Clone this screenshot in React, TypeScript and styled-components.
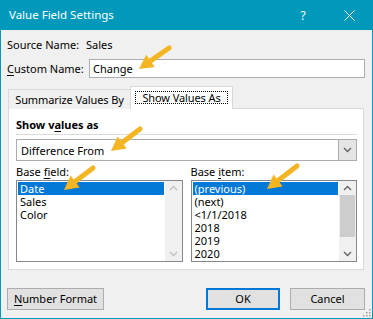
import React from "react";
import styled, { createGlobalStyle } from "styled-components";

const GlobalStyle = createGlobalStyle`
  html, body { margin: 0; padding: 0; background: #ffffff; }
  body {
    font-family: "Segoe UI", "Noto Sans", sans-serif;
    font-size: 11px;
    color: #000;
  }
  * { box-sizing: border-box; }
`;

const TEAL = "#0099bc";

const Window = styled.div`
  position: relative;
  width: 373px;
  height: 319px;
  background: #f0f0f0;
  border: 1px solid ${TEAL};
  border-top: none;
  display: flex;
  flex-direction: column;
  overflow: hidden;
  white-space: nowrap;
`;

const TitleBar = styled.div`
  height: 30px;
  flex: none;
  background: ${TEAL};
  color: #fff;
  display: flex;
  align-items: center;
  padding-left: 8px;
`;

const TitleText = styled.div`
  flex: 1;
  font-size: 11.5px;
  line-height: 16px;
`;

const TitleButton = styled.div`
  width: 46px;
  height: 30px;
  display: flex;
  align-items: center;
  justify-content: center;
  color: #fff;
  font-size: 12px;
`;

const Body = styled.div`
  flex: 1;
  display: flex;
  flex-direction: column;
  padding: 0 7px 0 6px;
`;

const InfoRow = styled.div<{ $top: number; $h: number }>`
  display: flex;
  align-items: center;
  margin-top: ${(p) => p.$top}px;
  height: ${(p) => p.$h}px;
  line-height: 16px;
`;

const Label = styled.div<{ $w: number }>`
  width: ${(p) => p.$w}px;
  flex: none;
`;

const TextInput = styled.div`
  flex: 1;
  height: 19px;
  background: #fff;
  border: 1px solid #abadb3;
  padding-left: 3px;
  display: flex;
  align-items: center;
`;

const TabStrip = styled.div`
  display: flex;
  align-items: flex-end;
  margin: 8px 1px -1px 1px;
  position: relative;
  z-index: 1;
`;

const Tab = styled.div<{ $active?: boolean; $w: number }>`
  display: flex;
  align-items: center;
  justify-content: center;
  width: ${(p) => p.$w}px;
  height: ${(p) => (p.$active ? 23 : 20)}px;
  padding-bottom: ${(p) => (p.$active ? 1 : 0)}px;
  background: ${(p) => (p.$active ? "#fff" : "#f0f0f0")};
  border: 1px solid #d9d9d9;
  border-bottom: none;
  margin-left: ${(p) => (p.$active ? "-1px" : "0")};
  line-height: 16px;
  letter-spacing: -0.1px;
`;

const FocusBox = styled.span`
  width: 93px;
  border: 1px dotted #000;
  line-height: 11px;
  height: 13px;
  display: flex;
  align-items: center;
  justify-content: center;
`;

const Panel = styled.div`
  margin: 0 1px;
  height: 162px;
  flex: none;
  background: #fff;
  border: 1px solid #d9d9d9;
  padding: 0 6px 0 7px;
  display: flex;
  flex-direction: column;
`;

const SectionTitle = styled.div`
  margin-top: 8px;
  height: 16px;
  line-height: 16px;
  font-weight: bold;
`;

const Separator = styled.div`
  margin-top: 1px;
  height: 1px;
  background: #dcdcdc;
`;

const Combo = styled.div`
  margin-top: 4px;
  height: 22px;
  display: flex;
  border: 1px solid #acacac;
  background: #fff;
`;

const ComboText = styled.div`
  flex: 1;
  padding-left: 3px;
  display: flex;
  align-items: center;
  border: 1px solid #fff;
`;

const ComboButton = styled.div`
  width: 18px;
  background: #e5e5e5;
  border-left: 1px solid #acacac;
  display: flex;
  align-items: center;
  justify-content: center;
`;

const ListsGrid = styled.div`
  display: grid;
  grid-template-columns: 1fr 1fr;
  column-gap: 8px;
`;

const ListColumn = styled.div`
  display: flex;
  flex-direction: column;
`;

const ListLabel = styled.div`
  margin-top: 3px;
  height: 16px;
  line-height: 16px;
`;

const ListBox = styled.div`
  height: 82px;
  border: 1px solid #828790;
  background: #fff;
  display: flex;
`;

const Items = styled.div`
  flex: 1;
  padding: 1px;
  overflow: hidden;
`;

const Item = styled.div<{ $selected?: boolean }>`
  height: 13px;
  line-height: 13px;
  padding-left: 2px;
  background: ${(p) => (p.$selected ? "#0078d7" : "transparent")};
  color: ${(p) => (p.$selected ? "#fff" : "#000")};
`;

const ScrollBar = styled.div`
  width: 17px;
  flex: none;
  background: #f0f0f0;
  display: flex;
  flex-direction: column;
`;

const ScrollButton = styled.div`
  height: 14px;
  flex: none;
  display: flex;
  align-items: center;
  justify-content: center;
`;

const ScrollTrack = styled.div`
  flex: 1;
  display: flex;
  flex-direction: column;
`;

const Thumb = styled.div<{ $h: number }>`
  height: ${(p) => p.$h}px;
  margin: 0 1px;
  background: #cdcdcd;
`;

const ButtonRow = styled.div`
  margin-top: 18px;
  display: flex;
  align-items: center;
  gap: 10px;
`;

const Spacer = styled.div`
  flex: 1;
`;

const Button = styled.div<{ $w: number; $default?: boolean }>`
  width: ${(p) => p.$w}px;
  height: 22px;
  background: #e1e1e1;
  border: ${(p) => (p.$default ? "2px solid #0078d7" : "1px solid #adadad")};
  display: flex;
  align-items: center;
  justify-content: center;
  line-height: 16px;
`;

const U = styled.span`
  text-decoration: underline;
  text-underline-offset: 2px;
`;

const Grip = styled.svg`
  position: absolute;
  right: 0;
  bottom: 0;
`;

const Overlay = styled.svg`
  position: absolute;
  left: -1px;
  top: 0;
  pointer-events: none;
`;

const Chevron = ({ up, color }: { up?: boolean; color: string }) => (
  <svg width="9" height="6" viewBox="0 0 9 6">
    <polyline
      points={up ? "1,5 4.5,1.5 8,5" : "1,1 4.5,4.5 8,1"}
      fill="none"
      stroke={color}
      strokeWidth="1.3"
    />
  </svg>
);

type Pt = [number, number];

const arrowParts = (tail: Pt, tip: Pt) => {
  const dx = tip[0] - tail[0];
  const dy = tip[1] - tail[1];
  const len = Math.hypot(dx, dy);
  const ux = dx / len;
  const uy = dy / len;
  const nx = -uy;
  const ny = ux;
  const hl = 14;
  const hw = 7.5;
  const bx = tip[0] - ux * hl;
  const by = tip[1] - uy * hl;
  const head = `${tip[0]},${tip[1]} ${bx + nx * hw},${by + ny * hw} ${bx - nx * hw},${by - ny * hw}`;
  return { shaftEnd: [bx + ux * 2, by + uy * 2] as Pt, head };
};

const Arrow = ({ tail, tip }: { tail: Pt; tip: Pt }) => {
  const { shaftEnd, head } = arrowParts(tail, tip);
  return (
    <g>
      <line
        x1={tail[0]}
        y1={tail[1]}
        x2={shaftEnd[0]}
        y2={shaftEnd[1]}
        stroke="#f3b521"
        strokeWidth="5"
        strokeLinecap="round"
      />
      <polygon points={head} fill="#f3b521" />
    </g>
  );
};

const arrows: { tail: Pt; tip: Pt }[] = [
  { tail: [169, 48], tip: [139, 69] },
  { tail: [140, 129], tip: [111, 151] },
  { tail: [93, 168], tip: [64, 190] },
  { tail: [297, 166], tip: [267, 189] },
];

export default function App() {
  return (
    <>
      <GlobalStyle />
      <Window>
        <TitleBar>
          <TitleText>Value Field Settings</TitleText>
          <TitleButton>?</TitleButton>
          <TitleButton>
            <svg width="11" height="11" viewBox="0 0 11 11">
              <path d="M0.5 0.5 L10.5 10.5 M10.5 0.5 L0.5 10.5" stroke="#fff" strokeWidth="1" />
            </svg>
          </TitleButton>
        </TitleBar>
        <Body>
          <InfoRow $top={7} $h={16}>
            <Label $w={79}>Source Name:</Label>
            <div>Sales</div>
          </InfoRow>
          <InfoRow $top={6} $h={19}>
            <Label $w={82}>
              <U>C</U>ustom Name:
            </Label>
            <TextInput>Change</TextInput>
          </InfoRow>
          <TabStrip>
            <Tab $w={123}>Summarize Values By</Tab>
            <Tab $w={103} $active>
              <FocusBox>Show Values As</FocusBox>
            </Tab>
          </TabStrip>
          <Panel>
            <SectionTitle>
              Show v<U>a</U>lues as
            </SectionTitle>
            <Separator />
            <Combo>
              <ComboText>Difference From</ComboText>
              <ComboButton>
                <Chevron color="#606060" />
              </ComboButton>
            </Combo>
            <ListsGrid>
              <ListColumn>
                <ListLabel>
                  Base <U>f</U>ield:
                </ListLabel>
                <ListBox>
                  <Items>
                    <Item $selected>Date</Item>
                    <Item>Sales</Item>
                    <Item>Color</Item>
                  </Items>
                  <ScrollBar>
                    <ScrollButton>
                      <Chevron up color="#c0c0c0" />
                    </ScrollButton>
                    <ScrollTrack />
                    <ScrollButton>
                      <Chevron color="#c0c0c0" />
                    </ScrollButton>
                  </ScrollBar>
                </ListBox>
              </ListColumn>
              <ListColumn>
                <ListLabel>
                  Base <U>i</U>tem:
                </ListLabel>
                <ListBox>
                  <Items>
                    <Item $selected>(previous)</Item>
                    <Item>(next)</Item>
                    <Item>&lt;1/1/2018</Item>
                    <Item>2018</Item>
                    <Item>2019</Item>
                    <Item>2020</Item>
                  </Items>
                  <ScrollBar>
                    <ScrollButton>
                      <Chevron up color="#606060" />
                    </ScrollButton>
                    <ScrollTrack>
                      <Thumb $h={42} />
                    </ScrollTrack>
                    <ScrollButton>
                      <Chevron color="#606060" />
                    </ScrollButton>
                  </ScrollBar>
                </ListBox>
              </ListColumn>
            </ListsGrid>
          </Panel>
          <ButtonRow>
            <Button $w={97}>
              <span>
                <U>N</U>umber Format
              </span>
            </Button>
            <Spacer />
            <Button $w={74} $default>
              OK
            </Button>
            <Button $w={75}>Cancel</Button>
          </ButtonRow>
        </Body>
        <Grip width="10" height="10" viewBox="0 0 10 10">
          {[
            [8, 2], [8, 5], [5, 5], [8, 8], [5, 8], [2, 8],
          ].map(([x, y]) => (
            <rect key={`${x}-${y}`} x={x - 1} y={y - 1} width="1.5" height="1.5" fill="#a0a0a0" />
          ))}
        </Grip>
        <Overlay width="373" height="319" viewBox="0 0 373 319">
          {arrows.map((a, i) => (
            <Arrow key={i} tail={a.tail} tip={a.tip} />
          ))}
        </Overlay>
      </Window>
    </>
  );
}
